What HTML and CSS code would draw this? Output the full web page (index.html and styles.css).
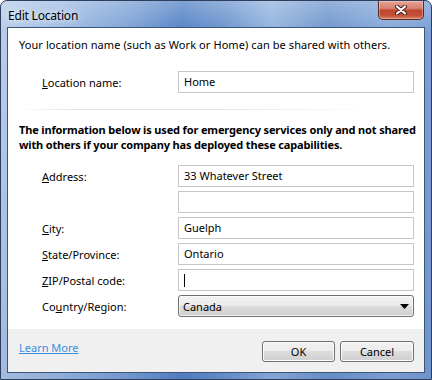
FILE: index.html
```html
<!DOCTYPE html>
<html lang="en">
<head>
    <meta charset="UTF-8">
    <title>Edit Location</title>
    <link rel="stylesheet" href="styles.css">
</head>
<body>
    <div class="window">
        <div class="titlebar">
            <span class="title">Edit Location</span>
            <div class="close-btn">
                <svg width="14" height="10" viewBox="0 0 14 10">
                    <path d="M3 1.5 L11 8.5 M11 1.5 L3 8.5" stroke="#3a1a14" stroke-width="4" stroke-linecap="round"/>
                    <path d="M3 1.5 L11 8.5 M11 1.5 L3 8.5" stroke="#fff" stroke-width="2.2" stroke-linecap="round"/>
                </svg>
            </div>
        </div>
        <div class="client">
            <div class="content">
                <p class="intro">Your location name (such as Work or Home) can be shared with others.</p>
                <div class="form-row first">
                    <label><u>L</u>ocation name:</label>
                    <div class="field">Home</div>
                </div>
                <div class="separator"></div>
                <p class="notice">The information below is used for emergency services only and not shared<br>with others if your company has deployed these capabilities.</p>
                <div class="form-grid">
                    <label><u>A</u>ddress:</label>
                    <div class="field">33 Whatever Street</div>
                    <span></span>
                    <div class="field"></div>
                    <label><u>C</u>ity:</label>
                    <div class="field">Guelph</div>
                    <label><u>S</u>tate/Province:</label>
                    <div class="field">Ontario</div>
                    <label><u>Z</u>IP/Postal code:</label>
                    <div class="field"><span class="caret"></span></div>
                    <label>Co<u>u</u>ntry/Region:</label>
                    <div class="select">
                        <span>Canada</span>
                        <svg width="9" height="5" viewBox="0 0 9 5"><path d="M0 0 H9 L4.5 5 Z" fill="#000"/></svg>
                    </div>
                </div>
            </div>
            <div class="footer">
                <a href="#" class="learn-more">Learn More</a>
                <div class="buttons">
                    <button class="btn ok">OK</button>
                    <button class="btn cancel">Cancel</button>
                </div>
            </div>
        </div>
    </div>
</body>
</html>
```

FILE: styles.css
```css
body, html {
    margin: 0;
    padding: 0;
    font-family: "Noto Sans", sans-serif;
    font-size: 11px;
    color: #000;
}

.window {
    width: 432px;
    height: 380px;
    box-sizing: border-box;
    border: 1px solid #2d3f5c;
    border-radius: 7px 7px 0 0;
    background:
        linear-gradient(180deg, rgba(255, 255, 255, 0.25) 0%, rgba(255, 255, 255, 0) 30px, rgba(40, 80, 150, 0.15) 100%),
        linear-gradient(90deg, #b8cdea 0%, #a0bde3 14%, #7ea2d6 30%, #5684c6 42%, #6e96cf 52%, #95b4df 63%, #7097ce 76%, #88aadb 90%, #7b9fd4 100%);
    display: flex;
    flex-direction: column;
    overflow: hidden;
}

.titlebar {
    height: 26px;
    display: flex;
    justify-content: space-between;
    align-items: flex-start;
    padding: 0 7px;
}

.title {
    margin-top: 7px;
    line-height: 16px;
    font-size: 12px;
    letter-spacing: -0.2px;
    text-shadow: 0 0 6px rgba(255, 255, 255, 0.9), 0 0 10px rgba(255, 255, 255, 0.6);
}

.close-btn {
    width: 46px;
    height: 19px;
    box-sizing: border-box;
    border: 1px solid #5b2b25;
    border-top: none;
    border-radius: 0 0 5px 5px;
    background: linear-gradient(180deg, #e7a396 0%, #d78270 40%, #bf4630 52%, #c4503a 80%, #dc8266 100%);
    box-shadow: inset 0 0 0 1px rgba(255, 230, 220, 0.35);
    display: flex;
    align-items: center;
    justify-content: center;
}

.client {
    margin: 0 6px;
    height: 346px;
    box-sizing: border-box;
    border: 1px solid #3c5477;
    background-color: #fff;
    display: flex;
    flex-direction: column;
}

.content {
    flex: 1;
    padding: 9px 0 0 11px;
}

.intro {
    margin: 0;
    line-height: 16px;
    letter-spacing: 0.08px;
}

.form-row,
.form-grid {
    display: grid;
    grid-template-columns: 136px 236px;
    align-items: center;
    padding-left: 23px;
}

.form-row.first {
    margin-top: 18px;
}

.form-grid {
    margin-top: 13px;
    row-gap: 4px;
}

.field {
    height: 22px;
    box-sizing: border-box;
    border: 1px solid #c6c6c6;
    padding: 0 5px;
    line-height: 20px;
    display: flex;
    align-items: center;
}

.caret {
    width: 1px;
    height: 13px;
    background-color: #000;
}

.separator {
    margin: 16px 50px 0 0;
    height: 1px;
    background: linear-gradient(90deg, rgba(227, 227, 227, 0) 0%, #e3e3e3 15%, #e3e3e3 55%, rgba(227, 227, 227, 0) 100%);
}

.notice {
    margin: 12px 0 0;
    font-weight: bold;
    line-height: 15px;
    letter-spacing: -0.15px;
    white-space: nowrap;
}

.select {
    height: 22px;
    box-sizing: border-box;
    border: 1px solid #707070;
    border-radius: 3px;
    background: linear-gradient(180deg, #f2f2f2 0%, #ebebeb 50%, #dddddd 50%, #cfcfcf 100%);
    box-shadow: inset 0 0 0 1px rgba(255, 255, 255, 0.7);
    display: flex;
    justify-content: space-between;
    align-items: center;
    padding: 0 4px 0 4px;
}

.footer {
    height: 43px;
    background-color: #f0f0f0;
    display: flex;
    justify-content: space-between;
    align-items: flex-start;
    padding: 0 10px 0 11px;
}

.learn-more {
    margin-top: 11px;
    line-height: 16px;
    color: #3b8de0;
}

.buttons {
    margin-top: 12px;
    display: flex;
    gap: 5px;
}

.btn {
    height: 21px;
    padding: 0;
    font-family: "Noto Sans", sans-serif;
    font-size: 11px;
    color: #000;
    border: 1px solid #707070;
    border-radius: 3px;
    background: linear-gradient(180deg, #f2f2f2 0%, #ebebeb 50%, #dddddd 50%, #cfcfcf 100%);
    box-shadow: inset 0 0 0 1px #fcfcfc;
}

.btn.ok {
    width: 73px;
}

.btn.cancel {
    width: 74px;
}
```
